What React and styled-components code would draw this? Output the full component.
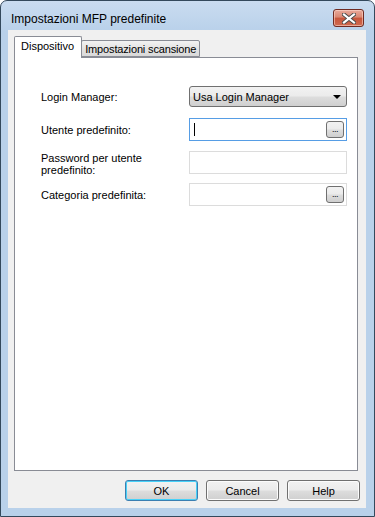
import React from "react";
import styled, { createGlobalStyle } from "styled-components";

const Global = createGlobalStyle`
  html, body { margin: 0; padding: 0; background: #ffffff; }
  body { font-family: "Liberation Sans", Arial, sans-serif; font-size: 11px; color: #000; }
  * { box-sizing: border-box; }
`;

const Window = styled.div`
  width: 375px;
  height: 517px;
  border: 1px solid #34495c;
  border-radius: 7px 7px 0 0;
  background: linear-gradient(#cadcf0 0px, #b9d1ea 30px, #b9d1ea 100%);
  display: flex;
  flex-direction: column;
  padding: 0 8px 8px 7px;
  overflow: hidden;
`;

const TitleBar = styled.div`
  height: 29px;
  display: flex;
  align-items: flex-start;
  justify-content: space-between;
  padding: 9px 2px 0 3px;
`;

const Title = styled.div`
  font-size: 12px;
  line-height: 14px;
  color: #000;
  padding-top: 2px;
`;

const CloseButton = styled.div`
  width: 31px;
  height: 18px;
  margin-top: -1px;
  border: 1px solid #6f2b22;
  border-radius: 3px;
  background: linear-gradient(#e9a99a 0%, #d98772 45%, #c8553b 50%, #cf6a4f 100%);
  box-shadow: inset 0 0 0 1px rgba(255, 220, 210, 0.55);
  display: flex;
  align-items: center;
  justify-content: center;
`;

const Client = styled.div`
  flex: 1;
  background: #f0f0f0;
  display: flex;
  flex-direction: column;
  padding: 6px 8px 7px 6px;
`;

const TabStrip = styled.div`
  display: flex;
  align-items: flex-end;
  height: 21px;
  position: relative;
  z-index: 1;
`;

const Tab = styled.div`
  height: ${(p) => (p.$active ? "22px" : "17px")};
  margin-bottom: ${(p) => (p.$active ? "-1px" : "0")};
  margin-left: ${(p) => (p.$active ? "0" : "-1px")};
  padding: ${(p) => (p.$active ? "3px 7px 0 6px" : "2px 3px 0 3px")};
  border: 1px solid #898c95;
  border-bottom: ${(p) => (p.$active ? "none" : "1px solid #898c95")};
  background: ${(p) => (p.$active ? "#ffffff" : "linear-gradient(#f2f2f2, #e3e3e3 50%, #d9d9d9 100%)")};
  border-radius: 2px 2px 0 0;
  font-size: 11px;
  line-height: 13px;
  letter-spacing: ${(p) => (p.$active ? "0" : "-0.15px")};
  white-space: nowrap;
  position: relative;
  z-index: ${(p) => (p.$active ? 2 : 1)};
`;

const Panel = styled.div`
  flex: 1;
  background: #ffffff;
  border: 1px solid #898c95;
  padding: 28px 11px 0 26px;
  display: flex;
  flex-direction: column;
`;

const Row = styled.div`
  display: grid;
  grid-template-columns: 148px 158px;
  align-items: ${(p) => p.$align || "center"};
  height: ${(p) => p.$h}px;
  align-content: start;
`;

const Label = styled.div`
  font-size: 11px;
  line-height: 12px;
  padding-top: ${(p) => p.$pt || 0}px;
  align-self: ${(p) => p.$self || "center"};
`;

const Combo = styled.div`
  height: 21px;
  border: 1px solid #707070;
  border-radius: 3px;
  background: linear-gradient(#f2f2f2 0%, #ebebeb 48%, #dddddd 52%, #cfcfcf 100%);
  display: flex;
  align-items: center;
  justify-content: space-between;
  padding: 0 5px 0 3px;
  font-size: 11px;
`;

const TextBox = styled.div`
  height: 23px;
  border: 1px solid ${(p) => (p.$focus ? "#569de5" : "#dcdcdc")};
  background: #ffffff;
  display: flex;
  align-items: center;
  justify-content: space-between;
  padding: 0 2px 0 4px;
`;

const Caret = styled.span`
  width: 1px;
  height: 13px;
  background: #000;
`;

const Dots = styled.div`
  width: 18px;
  height: 17px;
  border: 1px solid #707070;
  border-radius: 3px;
  background: linear-gradient(#f2f2f2 0%, #ebebeb 48%, #dddddd 52%, #cfcfcf 100%);
  font-size: 9px;
  line-height: 9px;
  display: flex;
  align-items: flex-end;
  justify-content: center;
  padding-bottom: 3px;
  margin-left: auto;
  letter-spacing: -0.5px;
`;

const ButtonRow = styled.div`
  display: flex;
  justify-content: flex-end;
  gap: 8px;
  margin-top: 9px;
  margin-right: -2px;
`;

const Button = styled.div`
  width: 73px;
  height: 21px;
  border: 1px solid ${(p) => (p.$default ? "#3c7fb1" : "#707070")};
  border-radius: 3px;
  background: linear-gradient(#f2f2f2 0%, #ebebeb 48%, #dddddd 52%, #cfcfcf 100%);
  box-shadow: ${(p) => (p.$default ? "inset 0 0 0 1px #48d1f8" : "inset 0 0 0 1px #fcfcfc")};
  display: flex;
  align-items: center;
  justify-content: center;
  font-size: 11px;
`;

const CloseIcon = () => (
  <svg width="14" height="11" viewBox="0 0 14 11">
    <path d="M2 1.5 L12 9.5 M12 1.5 L2 9.5" stroke="#4a4a4a" strokeWidth="4" strokeLinecap="square" />
    <path d="M2 1.5 L12 9.5 M12 1.5 L2 9.5" stroke="#ffffff" strokeWidth="2.2" strokeLinecap="square" />
  </svg>
);

const Arrow = () => (
  <svg width="8" height="4" viewBox="0 0 8 4">
    <path d="M0 0 H8 L4 4 Z" fill="#000" />
  </svg>
);

export default function App() {
  return (
    <>
      <Global />
      <Window>
        <TitleBar>
          <Title>Impostazioni MFP predefinite</Title>
          <CloseButton>
            <CloseIcon />
          </CloseButton>
        </TitleBar>
        <Client>
          <TabStrip>
            <Tab $active>Dispositivo</Tab>
            <Tab>Impostazioni scansione</Tab>
          </TabStrip>
          <Panel>
            <Row $h={32}>
              <Label>Login Manager:</Label>
              <Combo>
                <span>Usa Login Manager</span>
                <Arrow />
              </Combo>
            </Row>
            <Row $h={33}>
              <Label>Utente predefinito:</Label>
              <TextBox $focus>
                <Caret />
                <Dots>...</Dots>
              </TextBox>
            </Row>
            <Row $h={32} $align="start">
              <Label $self="start" $pt={1}>
                Password per utente
                <br />
                predefinito:
              </Label>
              <TextBox />
            </Row>
            <Row $h={23}>
              <Label>Categoria predefinita:</Label>
              <TextBox>
                <Dots>...</Dots>
              </TextBox>
            </Row>
          </Panel>
          <ButtonRow>
            <Button $default>OK</Button>
            <Button>Cancel</Button>
            <Button>Help</Button>
          </ButtonRow>
        </Client>
      </Window>
    </>
  );
}
